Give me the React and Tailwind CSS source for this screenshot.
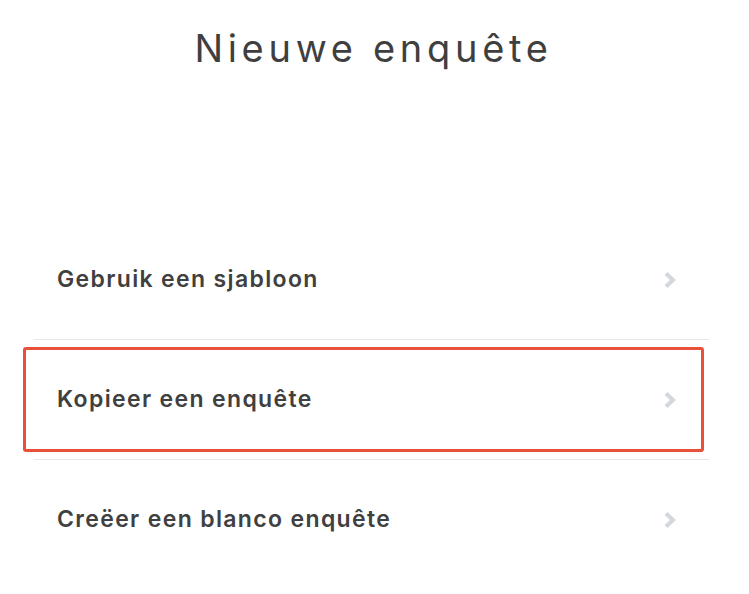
import React from "react";

function Chevron() {
  return (
    <svg width="14" height="18" viewBox="0 0 14 18" className="shrink-0">
      <polyline points="3,2.5 10,9 3,15.5" fill="none" stroke="#d3d7dc" strokeWidth="4" strokeLinecap="butt" strokeLinejoin="miter" />
    </svg>
  );
}

function Row({ label, highlight }) {
  return (
    <div className="relative flex h-[119px] items-center justify-between pl-[23px] pr-[32px]">
      {highlight && (
        <div className="pointer-events-none absolute left-[-11px] right-[5px] top-[7px] bottom-[7px] rounded-[3px] border-[3px] border-[#e8503a]" />
      )}
      <span className="text-[23px] font-semibold tracking-[1.35px] text-[#404040]">{label}</span>
      <Chevron />
    </div>
  );
}

export default function App() {
  return (
    <div className="min-h-[594px] w-[749px] bg-white" style={{ fontFamily: 'Inter, "Open Sans", sans-serif' }}>
      <h1 className="pt-[20px] pr-[2px] text-center text-[38px] font-normal leading-[56px] tracking-[4.7px] text-[#3f3f3f]">Nieuwe enquête</h1>
      <div className="ml-[34px] mr-[40px] mt-[144px]">
        <Row label="Gebruik een sjabloon" />
        <div className="h-px bg-[#e8e8e8]" />
        <Row label="Kopieer een enquête" highlight />
        <div className="h-px bg-[#e8e8e8]" />
        <Row label="Creëer een blanco enquête" />
      </div>
    </div>
  );
}
